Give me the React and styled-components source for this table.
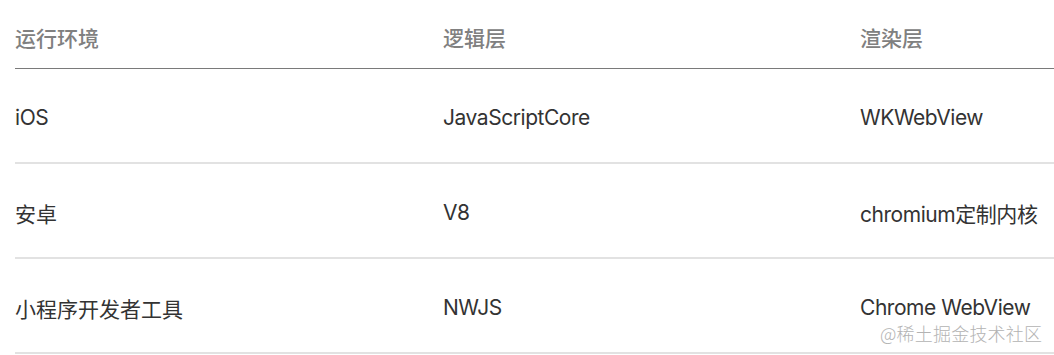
import React from "react";
import styled, { createGlobalStyle } from "styled-components";

const Global = createGlobalStyle`
  html, body { margin: 0; padding: 0; background: #ffffff; }
  body { font-family: "Inter", "Noto Sans CJK SC", sans-serif; }
`;

const Page = styled.div`
  position: relative;
  width: 1054px;
  height: 355px;
  overflow: hidden;
  background: #fff;
  padding-left: 15px;
  box-sizing: border-box;
`;

const Table = styled.div`
  display: grid;
  grid-template-columns: 428px 417px 1fr;
  width: 1039px;
`;

const Row = styled.div`
  display: contents;
`;

const HeadCell = styled.div`
  height: 69px;
  box-sizing: border-box;
  padding-top: 5px;
  display: flex;
  align-items: center;
  border-bottom: 1px solid #7a7a7a;
  font-size: 21px;
  font-weight: 500;
  color: #808080;
  font-family: "Inter", "Noto Sans CJK SC", sans-serif;
`;

const Cell = styled.div`
  height: 95px;
  box-sizing: border-box;
  padding-top: 4px;
  display: flex;
  align-items: center;
  border-bottom: 2px solid #e2e2e2;
  font-size: 21px;
  letter-spacing: ${(p) => (p.$latin ? "-0.45px" : "0")};
  color: #333333;
  white-space: nowrap;
  font-family: "Inter", "Noto Sans CJK SC", sans-serif;
`;

const Watermark = styled.div`
  position: absolute;
  left: 880px;
  top: 320px;
  font-size: 18px;
  color: #b3b3b3;
  letter-spacing: 0.2px;
  font-family: "Noto Sans CJK SC", sans-serif;
  font-weight: 300;
`;

const head = ["运行环境", "逻辑层", "渲染层"];
const rows = [
  ["iOS", "JavaScriptCore", "WKWebView"],
  ["安卓", "V8", "chromium定制内核"],
  ["小程序开发者工具", "NWJS", "Chrome WebView"],
];

const isLatin = (s) => /[A-Za-z]/.test(s);

export default function App() {
  return (
    <>
      <Global />
      <Page>
        <Table>
          <Row>
            {head.map((h) => (
              <HeadCell key={h}>{h}</HeadCell>
            ))}
          </Row>
          {rows.map((r) => (
            <Row key={r[0]}>
              {r.map((c) => (
                <Cell key={c} $latin={isLatin(c)}>
                  {c}
                </Cell>
              ))}
            </Row>
          ))}
        </Table>
        <Watermark>@稀土掘金技术社区</Watermark>
      </Page>
    </>
  );
}
